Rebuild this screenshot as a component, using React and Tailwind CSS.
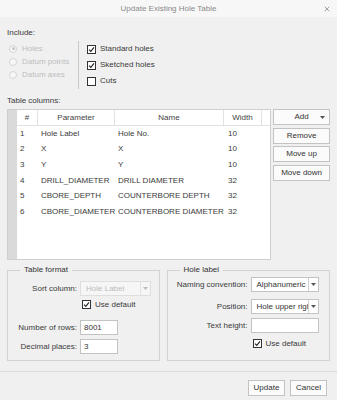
import { X } from 'lucide-react'

const font = { fontFamily: '"Liberation Sans", Arial, sans-serif' }

function Check({ checked, className = '' }) {
  return (
    <span className={`flex h-[9px] w-[9px] shrink-0 items-center justify-center border border-[#333] bg-white ${className}`}>
      {checked && (
        <svg width="7" height="7" viewBox="0 0 7 7">
          <path d="M1 3.6 L2.8 5.4 L6 1.4" fill="none" stroke="#222" strokeWidth="1.1" />
        </svg>
      )}
    </span>
  )
}

function Radio({ on, label }) {
  return (
    <div className="flex h-[13px] items-center gap-[5px] text-[#bdbdbd]">
      <span className="flex h-[8px] w-[8px] items-center justify-center rounded-full border border-[#d4d4d4] bg-[#f7f7f7]">
        {on && <span className="h-[3px] w-[3px] rounded-full bg-[#c4c4c4]" />}
      </span>
      {label}
    </div>
  )
}

function Btn({ children, className = '' }) {
  return (
    <div className={`flex h-[16px] items-center justify-center border border-[#c3c3c3] bg-[#fbfbfb] text-[#333] ${className}`}>
      {children}
    </div>
  )
}

function Arrow({ color = '#555' }) {
  return (
    <svg width="5" height="3" viewBox="0 0 5 3">
      <path d="M0 0 H5 L2.5 3 Z" fill={color} />
    </svg>
  )
}

function Combo({ value, disabled, w }) {
  return (
    <div className={`flex h-[15px] items-stretch border ${disabled ? 'border-[#dedede] bg-[#f6f6f6] text-[#bcbcbc]' : 'border-[#c3c3c3] bg-white text-[#333]'} ${w}`}>
      <div className="flex-1 overflow-hidden whitespace-nowrap pl-[5px] leading-[13px]">{value}</div>
      <div className={`flex w-[10px] items-center justify-center border-l ${disabled ? 'border-[#e4e4e4]' : 'border-[#d0d0d0]'}`}>
        <Arrow color={disabled ? '#bbb' : '#555'} />
      </div>
    </div>
  )
}

const rows = [
  ['1', 'Hole Label', 'Hole No.', '10'],
  ['2', 'X', 'X', '10'],
  ['3', 'Y', 'Y', '10'],
  ['4', 'DRILL_DIAMETER', 'DRILL DIAMETER', '32'],
  ['5', 'CBORE_DEPTH', 'COUNTERBORE DEPTH', '32'],
  ['6', 'CBORE_DIAMETER', 'COUNTERBORE DIAMETER', '32'],
]

export default function App() {
  return (
    <div style={font} className="flex h-[400px] w-[337px] flex-col overflow-hidden whitespace-nowrap bg-[#f0f0f0] text-[8px] text-[#3a3a3a]">
      {/* title bar */}
      <div className="relative flex h-[17px] shrink-0 items-center justify-center bg-[#f7f7f7] text-[#8a8a8a]">
        Update Existing Hole Table
        <X size={8} strokeWidth={2} className="absolute right-[6px] top-[5px] text-[#777]" />
      </div>

      <div className="flex flex-1 flex-col px-[7px]">
        <div className="mt-[9px] leading-[13px]">Include:</div>
        <div className="mt-[2px] flex">
          <div className="flex w-[71px] flex-col pl-[2px] pt-[1px]">
            <Radio on label="Holes" />
            <Radio label="Datum points" />
            <Radio label="Datum axes" />
          </div>
          <div className="flex flex-col border-l border-[#c8c8c8] pl-[8px]">
            {[['Standard holes', true], ['Sketched holes', true], ['Cuts', false]].map(([t, c]) => (
              <div key={t} className="flex h-[16px] items-center gap-[4px]">
                <Check checked={c} />
                {t}
              </div>
            ))}
          </div>
        </div>

        <div className="mt-[5px] leading-[13px]">Table columns:</div>
        <div className="mt-[2px] flex gap-[2px]">
          <div className="flex h-[151px] w-[265px] border border-[#cfcfcf] bg-white">
            <div className="w-[9px] shrink-0 bg-[#dadada]" />
            <div className="flex flex-1 flex-col">
              <div className="flex h-[16px] shrink-0 border-b border-[#e2e2e2] text-[#444]">
                <div className="flex w-[21px] items-center justify-center border-r border-[#e2e2e2]">#</div>
                <div className="flex w-[77px] items-center justify-center border-r border-[#e2e2e2]">Parameter</div>
                <div className="flex w-[109px] items-center justify-center border-r border-[#e2e2e2]">Name</div>
                <div className="flex w-[38px] items-center justify-center border-r border-[#e2e2e2]">Width</div>
                <div className="flex-1" />
              </div>
              {rows.map(r => (
                <div key={r[0]} className="flex h-[15.6px] items-center">
                  <div className="w-[21px] pl-[3px]">{r[0]}</div>
                  <div className="w-[77px] pl-[3px]">{r[1]}</div>
                  <div className="w-[109px] pl-[3px]">{r[2]}</div>
                  <div className="w-[38px] pl-[4px]">{r[3]}</div>
                </div>
              ))}
            </div>
          </div>
          <div className="flex w-[57px] flex-col gap-[2.5px]">
            <Btn className="relative">
              Add
              <span className="absolute right-[4px] top-[6px] flex"><Arrow /></span>
            </Btn>
            <Btn>Remove</Btn>
            <Btn>Move up</Btn>
            <Btn>Move down</Btn>
          </div>
        </div>

        <div className="mt-[4px] flex gap-[7px]">
          <fieldset className="h-[97px] w-[153px] border border-[#d3d3d3] px-[4px]">
            <legend className="ml-[8px] px-[4px] leading-[12px] text-[#333]">Table format</legend>
            <div className="mt-[5px] flex items-center">
              <div className="w-[68px] pr-[3px] text-right">Sort column:</div>
              <Combo value="Hole Label" disabled w="w-[71px]" />
            </div>
            <div className="mt-[2px] flex h-[13px] items-center gap-[4px] pl-[70px]">
              <Check checked />
              Use default
            </div>
            <div className="mt-[9px] flex items-center">
              <div className="w-[68px] pr-[3px] text-right">Number of rows:</div>
              <div className="h-[15px] w-[38px] border border-[#c3c3c3] bg-white pl-[3px] leading-[13px] text-[#333]">8001</div>
            </div>
            <div className="mt-[4px] flex items-center">
              <div className="w-[68px] pr-[3px] text-right">Decimal places:</div>
              <div className="h-[15px] w-[38px] border border-[#c3c3c3] bg-white pl-[3px] leading-[13px] text-[#333]">3</div>
            </div>
          </fieldset>
          <fieldset className="h-[97px] w-[164px] border border-[#d3d3d3] px-[4px]">
            <legend className="ml-[8px] px-[4px] leading-[12px] text-[#333]">Hole label</legend>
            <div className="mt-[1px] flex items-center">
              <div className="w-[79px] pr-[3px] text-right">Naming convention:</div>
              <Combo value="Alphanumeric" w="w-[68px]" />
            </div>
            <div className="mt-[7px] flex items-center">
              <div className="w-[79px] pr-[3px] text-right">Position:</div>
              <Combo value="Hole upper right" w="w-[68px]" />
            </div>
            <div className="mt-[4px] flex items-center">
              <div className="w-[79px] pr-[3px] text-right">Text height:</div>
              <div className="h-[15px] w-[68px] border border-[#c3c3c3] bg-white" />
            </div>
            <div className="mt-[4px] flex h-[13px] items-center gap-[4px] pl-[81px]">
              <Check checked />
              Use default
            </div>
          </fieldset>
        </div>
      </div>

      <div className="flex h-[29px] shrink-0 items-start justify-end gap-[5px] border-t border-[#dadada] pr-[10px] pt-[8px]">
        <Btn className="w-[37px]">Update</Btn>
        <Btn className="w-[37px]">Cancel</Btn>
      </div>
    </div>
  )
}
